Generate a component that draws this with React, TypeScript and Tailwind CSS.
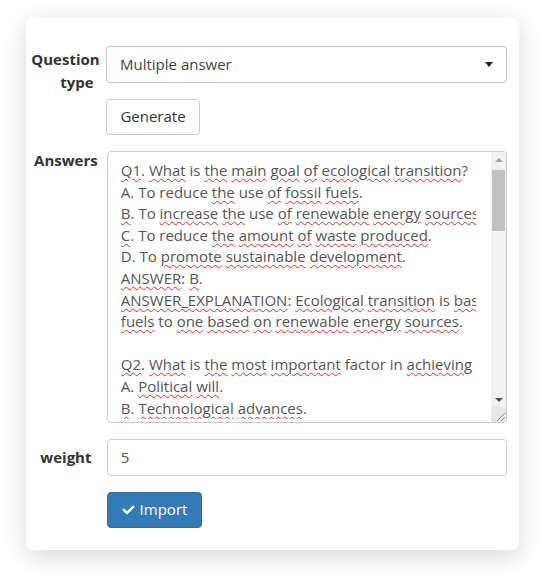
import { FaCheck } from "react-icons/fa";

const lines = [
  "{Q1}. {What} is {the} {main} {goal} {of} {ecological} {transition}?",
  "A. To reduce {the} use {of} {fossil} {fuels}.",
  "{B}. To {increase} {the} use {of} {renewable} {energy} {sources}.",
  "{C}. To reduce {the} {amount} {of} {waste} {produced}.",
  "D. To {promote} {sustainable} {development}.",
  "{ANSWER}: {B}.",
  "{ANSWER_EXPLANATION}: {Ecological} {transition} is {based} on a shift from fossil",
  "{fuels} to {one} {based} {on} {renewable} {energy} {sources}.",
  "",
  "{Q2}. {What} is {the} {most} {important} factor in {achieving} ecological transition?",
  "A. {Political} {will}.",
  "{B}. {Technological} {advances}.",
];

function Line({ text }: { text: string }) {
  const parts = text.split(/\{([^}]+)\}/);
  return (
    <div className="h-[21.6px] whitespace-pre">
      {parts.map((p, i) =>
        i % 2 === 1 ? (
          <span
            key={i}
            className="underline decoration-wavy decoration-[#e5281f] decoration-1 underline-offset-[2px]"
          >
            {p}
          </span>
        ) : (
          <span key={i}>{p}</span>
        )
      )}
      {text === "" && " "}
    </div>
  );
}

function Scrollbar() {
  return (
    <div className="flex w-[15px] flex-col bg-[#f1f1f1]">
      <div className="flex h-[15px] items-center justify-center">
        <div className="h-0 w-0 border-x-[4px] border-b-[4px] border-x-transparent border-b-[#a3a3a3]" />
      </div>
      <div className="flex-1 px-[1px] pt-[3px]">
        <div className="h-[61px] bg-[#c1c1c1]" />
      </div>
      <div className="flex h-[15px] items-center justify-center">
        <div className="h-0 w-0 border-x-[4px] border-t-[4px] border-x-transparent border-t-[#505050]" />
      </div>
      <div className="flex h-[15px] items-end justify-end bg-[#e6e6e6]">
        <svg width="12" height="12" viewBox="0 0 12 12">
          <path d="M11 3 L3 11 M11 7 L7 11" stroke="#8a8a8a" strokeWidth="1" />
        </svg>
      </div>
    </div>
  );
}

export default function App() {
  return (
    <div
      className="min-h-[584px] bg-white pl-[26px] pt-[18px] text-[15px] leading-[1.42857] text-[#333]"
      style={{ fontFamily: '"Open Sans", "Liberation Sans", sans-serif' }}
    >
      <div className="w-[493px] rounded-[7px] bg-white pb-[22px] pl-[5px] pr-[12px] pt-[28px] shadow-[0_6px_24px_rgba(0,0,0,0.16)]">
        <div className="flex flex-col gap-4">
          <div className="flex gap-[6px]">
            <label className="w-[70px] pt-[2px] text-center font-bold leading-[23px]">
              Question
              <br />
              <span className="ml-[23px]">type</span>
            </label>
            <div className="flex flex-col gap-4">
              <div className="flex h-[37px] w-[401px] items-center justify-between rounded-[4px] border border-[#c4c4c4] bg-white pl-[13px] pr-[13px] text-[#444]">
                <span>Multiple answer</span>
                <div className="h-0 w-0 border-x-[4px] border-t-[5px] border-x-transparent border-t-[#222]" />
              </div>
              <button className="h-[36px] w-[94px] rounded-[4px] border border-[#ccc] bg-white text-[#333]">
                Generate
              </button>
            </div>
          </div>

          <div className="flex gap-[6px]">
            <label className="-mt-[2px] w-[70px] text-center font-bold leading-[22px]">
              Answers
            </label>
            <div className="flex h-[272px] w-[401px] overflow-hidden rounded-[4px] border border-[#ccc] bg-white text-[#555]">
              <div className="flex-1 overflow-hidden pl-[13px] pr-[15px] pt-[8px]">
                <div className="w-[355px] overflow-hidden">
                  {lines.map((l, i) => (
                    <Line key={i} text={l} />
                  ))}
                </div>
              </div>
              <Scrollbar />
            </div>
          </div>

          <div className="flex items-center gap-[6px]">
            <label className="w-[70px] text-center font-bold">weight</label>
            <div className="flex h-[37px] w-[401px] items-center rounded-[4px] border border-[#ccc] bg-white pl-[13px] text-[#555]">
              5
            </div>
          </div>

          <div className="pl-[76px]">
            <button className="flex h-[36px] w-[95px] items-center justify-center gap-[5px] rounded-[4px] border border-[#2e6da4] bg-[#337ab7] text-white">
              <FaCheck className="h-[12px] w-[13px]" />
              Import
            </button>
          </div>
        </div>
      </div>
    </div>
  );
}
